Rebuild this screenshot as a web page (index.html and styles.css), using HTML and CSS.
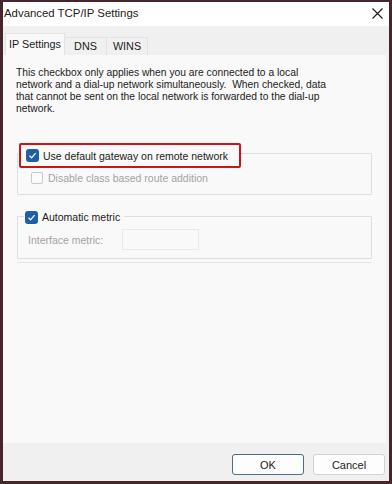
FILE: index.html
```html
<!DOCTYPE html>
<html>
<head>
<meta charset="utf-8">
<link rel="stylesheet" href="styles.css">
</head>
<body>
<div class="window">
  <div class="titlebar">
    <span class="title">Advanced TCP/IP Settings</span>
    <svg class="close" width="11" height="11" viewBox="0 0 11 11"><path d="M0.5 0.5 L10.5 10.5 M10.5 0.5 L0.5 10.5" stroke="#1a1a1a" stroke-width="1.1" fill="none"/></svg>
  </div>
  <div class="tabstrip">
    <div class="tab selected">IP Settings</div>
    <div class="tab">DNS</div>
    <div class="tab">WINS</div>
  </div>
  <div class="panel">
    <p class="intro">This checkbox only applies when you are connected to a local<br>network and a dial-up network simultaneously.&nbsp; When checked, data<br>that cannot be sent on the local network is forwarded to the dial-up<br>network.</p>

    <div class="group group-gateway">
      <div class="legend highlight">
        <span class="check on"><svg width="9" height="9" viewBox="0 0 9 9"><path d="M1.5 4.8 L3.6 6.8 L7.6 2.2" stroke="#fff" stroke-width="1.2" fill="none"/></svg></span>
        <span class="label">Use default gateway on remote network</span>
      </div>
      <div class="row disabled">
        <span class="check off"></span>
        <span class="label">Disable class based route addition</span>
      </div>
    </div>

    <div class="group group-metric">
      <div class="legend plain">
        <span class="check on"><svg width="9" height="9" viewBox="0 0 9 9"><path d="M1.5 4.8 L3.6 6.8 L7.6 2.2" stroke="#fff" stroke-width="1.2" fill="none"/></svg></span>
        <span class="label">Automatic metric</span>
      </div>
      <div class="row metric disabled">
        <span class="label">Interface metric:</span>
        <span class="input"></span>
      </div>
    </div>
    <div class="etch"></div>
  </div>
  <div class="footer">
    <button class="btn default">OK</button>
    <button class="btn">Cancel</button>
  </div>
</div>
</body>
</html>
```

FILE: styles.css
```css
* { box-sizing: border-box; }
html, body { margin: 0; padding: 0; }
body {
  width: 392px;
  height: 484px;
  font-family: "Liberation Sans", Arial, sans-serif;
  color: #1b1b1b;
}
.window {
  width: 392px;
  height: 484px;
  border-style: solid;
  border-color: #46252b;
  border-width: 2px 3px 3px 3px;
  background: #f0f0f0;
  display: flex;
  flex-direction: column;
}
.titlebar {
  height: 24px;
  background: #ffffff;
  display: flex;
  align-items: center;
  justify-content: space-between;
  padding: 0 6px 2px 1px;
}
.title {
  font-size: 11.4px;
}
.close { display: block; }
.tabstrip {
  height: 29px;
  display: flex;
  align-items: flex-end;
  padding-left: 2px;
}
.tab {
  height: 18px;
  font-size: 10.8px;
  line-height: 17px;
  border: 1px solid #e3e3e3;
  border-bottom: none;
  border-left: none;
  background: #f0f0f0;
  text-align: center;
}
.tab:nth-child(2) { width: 42px; }
.tab:nth-child(3) { width: 41px; }
.tab.selected {
  width: 60px;
  height: 22px;
  line-height: 21px;
  background: #f9f9f9;
  border: 1px solid #e3e3e3;
  border-bottom: none;
}
.panel {
  flex: 1;
  background: #f9f9f9;
  margin-right: 3px;
  padding: 12px 13px 0 14px;
  display: flex;
  flex-direction: column;
}
.intro {
  margin: 0 0 0 -1px;
  font-size: 10.3px;
  line-height: 12px;
  white-space: nowrap;
}
.group {
  width: 355px;
  border: 1px solid #dedede;
  border-radius: 1px;
}
.group-gateway {
  margin-top: 38px;
  height: 42px;
}
.legend {
  display: flex;
  align-items: center;
  background: #f9f9f9;
  font-size: 10.5px;
  width: max-content;
}
.highlight {
  margin: -11px 0 0 1px;
  border: 2.5px solid #c4161c;
  border-radius: 2px;
  height: 25px;
  width: 222px;
  padding-left: 5px;
}
.check {
  width: 13px;
  height: 13px;
  border-radius: 3px;
  display: inline-flex;
  align-items: center;
  justify-content: center;
  flex: none;
}
.check.on { background: #1e5fa6; }
.check.off { border: 1px solid #c9c9c9; background: #fbfbfb; border-radius: 2px; width: 12px; height: 12px; }
.label { white-space: nowrap; }
.highlight .label { margin-left: 4px; }
.row {
  display: flex;
  align-items: center;
  font-size: 10.5px;
}
.disabled { color: #a3a3a3; }
.group-gateway .row {
  margin: 1px 0 0 13px;
  height: 18px;
}
.group-gateway .row .label { margin-left: 5px; }
.group-metric {
  margin-top: 21px;
  height: 43px;
}
.plain {
  margin: -7px 0 0 6px;
  padding: 0 4px 0 1px;
  height: 14px;
}
.plain .label { margin-left: 4px; }
.metric {
  margin: 5px 0 0 10px;
}
.input {
  width: 77px;
  height: 21px;
  border: 1px solid #e9e9e9;
  background: #f9f9f9;
  margin-left: 19px;
}
.etch {
  width: 355px;
  height: 1px;
  background: #e6e6e6;
  margin-top: 3px;
}
.footer {
  height: 38px;
  display: flex;
  justify-content: flex-end;
  align-items: flex-start;
  gap: 9px;
  padding: 11px 4px 0 0;
}
.btn {
  width: 72px;
  height: 21px;
  font-family: inherit;
  font-size: 11px;
  color: #1b1b1b;
  background: #fdfdfd;
  border: 1px solid #d2d2d2;
  border-radius: 3px;
  padding: 0;
}
.btn.default {
  border: 1px solid #4d6b86;
}
```
